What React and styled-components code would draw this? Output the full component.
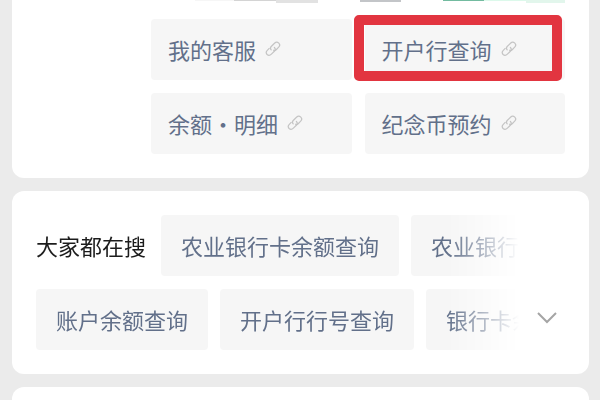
import React from "react";
import styled, { createGlobalStyle } from "styled-components";

const GlobalStyle = createGlobalStyle`
  * {
    box-sizing: border-box;
  }

  body {
    margin: 0;
    background: #ebebeb;
    font-family: 'Noto Sans CJK SC', sans-serif;
  }
`;

const Page = styled.main`
  display: flex;
  flex-direction: column;
  gap: 13px;
  min-height: 100vh;
  padding: 0 11px 0 12px;
`;

const Card = styled.section`
  padding: 24px;
  border-radius: 12px;
  background: #fff;
`;

const AccountCard = styled(Card)`
  padding-top: 0;
  padding-left: 139px;
  border-radius: 0 0 12px 12px;
`;

const NextCard = styled(Card)`
  flex: 1;
  padding: 0;
  border-radius: 12px 12px 0 0;
`;

const Banner = styled.svg`
  display: block;
  width: 100%;
  height: 4px;
  margin-bottom: 15px;
`;

const LinkGrid = styled.nav`
  display: grid;
  grid-template-columns: 1fr 1fr;
  gap: 13px;
`;

const Chip = styled.a`
  position: relative;
  display: flex;
  flex-shrink: 0;
  align-items: center;
  height: 61px;
  padding: 0 20px 2px;
  border-radius: 4px;
  background: #f6f6f6;
  color: #62708a;
  font-size: 22px;
  line-height: 32px;
  white-space: nowrap;
  text-decoration: none;
`;

const LinkChip = styled(Chip)`
  gap: 9px;
  padding: 0 17px 2px;
`;

const Highlight = styled.span`
  position: absolute;
  inset: -4px 3px -1px -11px;
  border: 10px solid #e23540;
  border-radius: 5px;
  pointer-events: none;
`;

const SearchCard = styled(Card)`
  display: flex;
  align-items: flex-end;
  gap: 10px;
`;

const Suggestions = styled.div`
  display: flex;
  flex: 1;
  flex-direction: column;
  gap: 13px;
  min-width: 0;
  overflow: hidden;
  mask-image: linear-gradient(to left, transparent 0, #000 72px);
`;

const Row = styled.div`
  display: flex;
  align-items: center;
  gap: 12px;
`;

const Title = styled.h2`
  flex-shrink: 0;
  margin: 0;
  padding: 0 3px 2px 0;
  color: #1c1c1c;
  font-size: 22px;
  font-weight: 400;
  line-height: 32px;
`;

const ExpandButton = styled.button`
  display: flex;
  align-items: center;
  justify-content: center;
  width: 36px;
  height: 64px;
  padding: 0;
  border: none;
  background: none;
  color: #a5a5a5;
  cursor: pointer;
`;

const LinkIcon = () => (
  <svg width="16" height="16" viewBox="0 0 16 16" fill="none" stroke="#c4c4c4" strokeWidth="1.2" strokeLinecap="round" aria-hidden="true">
    <path d="M6.2 8.8C5.2 7.7 5.3 6.5 6.2 5.5L9.5 2.3C10.8 1 12.6 1 13.8 2.1C15 3.3 14.9 5 13.7 6.2L11.2 8.7C10.4 9.4 9.4 9.6 8.6 9.2" />
    <path d="M9.4 6.5C10.5 7.6 10.5 9 9.6 10L6.4 13.2C5.1 14.5 3.3 14.6 2.1 13.5C1 12.3 1 10.6 2.3 9.3L4.2 7.4" />
  </svg>
);

const links = [
  { label: "我的客服" },
  { label: "开户行查询", highlighted: true },
  { label: "余额・明细" },
  { label: "纪念币预约" },
];

const App = () => (
  <>
    <GlobalStyle />
    <Page>
      <AccountCard>
        <Banner viewBox="0 0 414 4" preserveAspectRatio="none" aria-hidden="true">
          <rect x="44" width="39" height="1" fill="#f6f6f6" />
          <rect x="83" width="42" height="1" fill="#d4d4d4" />
          <rect x="125" width="42" height="3" fill="#e2e2e2" />
          <rect x="209" width="41" height="2" fill="#c3c5c8" />
          <rect x="292" width="41" height="1" fill="#73bba0" />
          <rect x="333" width="42" height="1" fill="#dcf9eb" />
          <rect x="375" width="39" height="3" fill="#e2f6ec" />
        </Banner>
        <LinkGrid>
          {links.map(({ label, highlighted }) => (
            <LinkChip href="#" key={label}>
              {label}
              <LinkIcon />
              {highlighted && <Highlight />}
            </LinkChip>
          ))}
        </LinkGrid>
      </AccountCard>

      <SearchCard>
        <Suggestions>
          <Row>
            <Title>大家都在搜</Title>
            <Chip href="#">农业银行卡余额查询</Chip>
            <Chip href="#">农业银行卡</Chip>
          </Row>
          <Row>
            <Chip href="#">账户余额查询</Chip>
            <Chip href="#">开户行行号查询</Chip>
            <Chip href="#">银行卡余额</Chip>
          </Row>
        </Suggestions>
        <ExpandButton aria-label="展开">
          <svg width="20" height="12" viewBox="0 0 20 12" fill="none" stroke="currentColor" strokeWidth="2" aria-hidden="true">
            <path d="M1 1L10 10L19 1" />
          </svg>
        </ExpandButton>
      </SearchCard>

      <NextCard />
    </Page>
  </>
);

export default App;
